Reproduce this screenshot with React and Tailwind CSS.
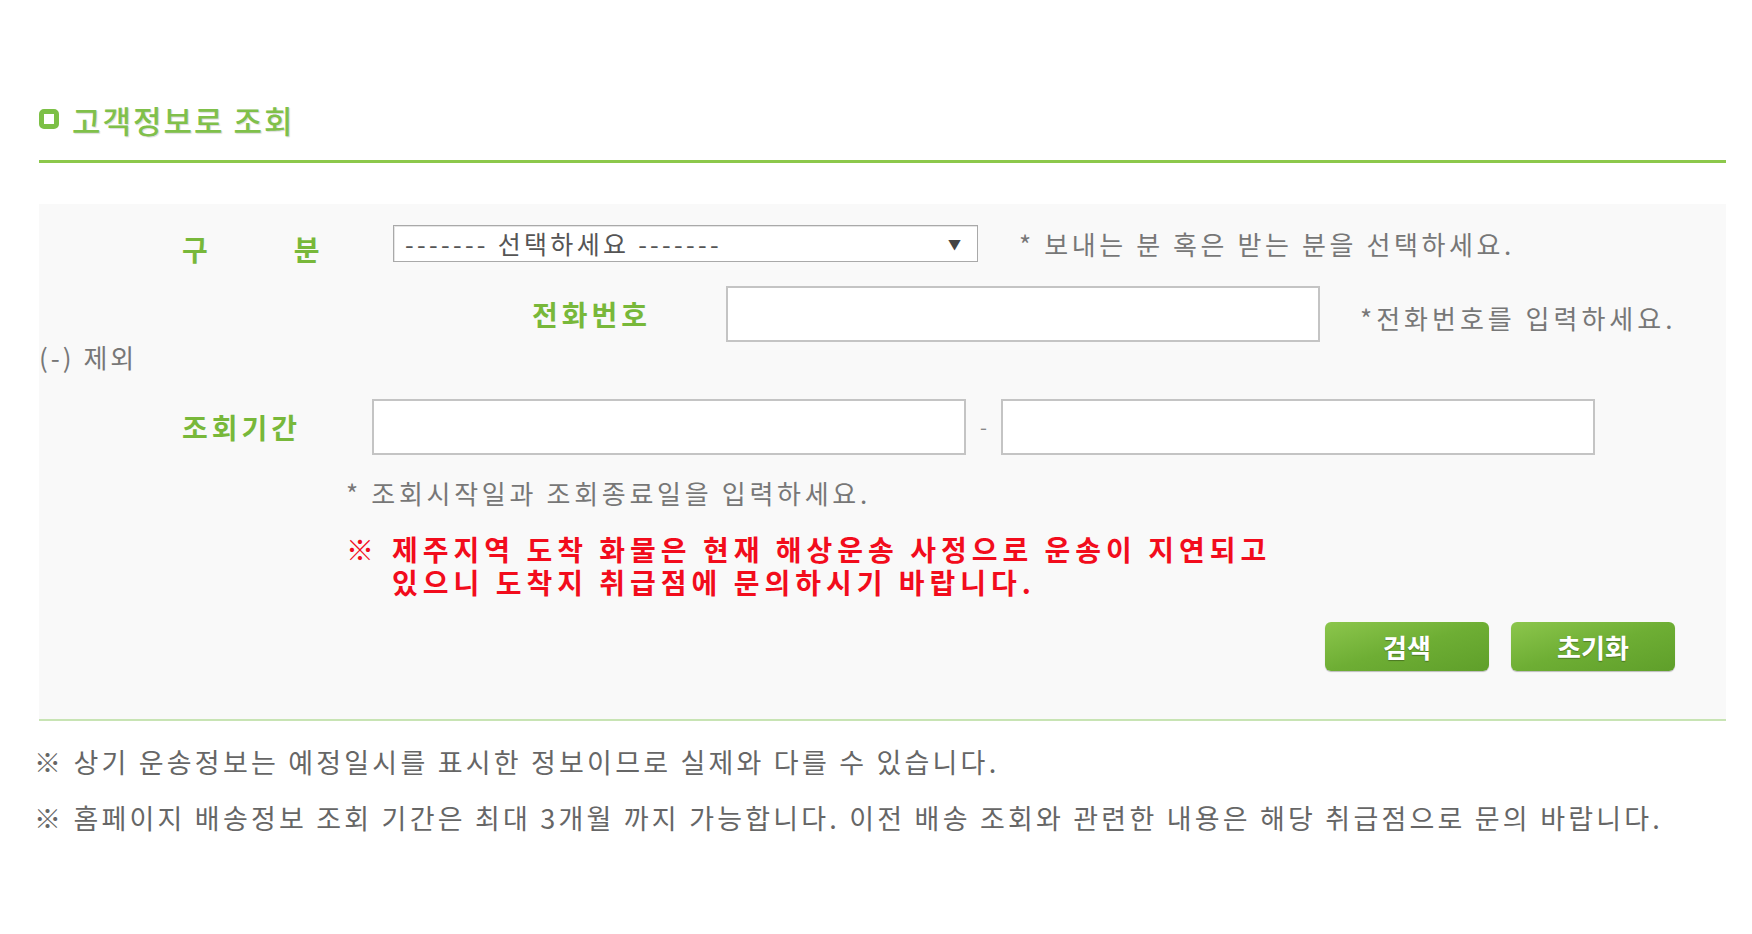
import React from 'react';

const font = { fontFamily: '"Noto Sans CJK KR", "Noto Sans", sans-serif' };

const Label = ({ children, className = '' }) => (
  <span className={`font-bold text-[28px] text-[#78b83a] leading-none tracking-[4px] ${className}`}>{children}</span>
);

const TextBox = ({ className = '' }) => (
  <input
    type="text"
    className={`h-[56px] w-[594px] bg-white border-2 border-[#c4c4c4] outline-none ${className}`}
  />
);

const GreenButton = ({ children }) => (
  <button className="relative w-[164px] h-[49px] rounded-[6px] overflow-hidden bg-gradient-to-br from-[#8cc64c] via-[#6eae34] to-[#5f9f2a] text-white font-bold text-[26px] leading-none shadow-[0_1px_1px_rgba(0,0,0,0.25)]">
    <span className="relative z-[1] [text-shadow:0_1px_1px_rgba(0,0,0,0.3)]">{children}</span>
  </button>
);

export default function App() {
  return (
    <div className="w-[1752px] min-h-[934px] bg-white text-[#666]" style={font}>
      <div className="ml-[39px] w-[1687px] pt-[99px]">
        {/* 타이틀 */}
        <div className="flex items-center h-[40px]">
          <span className="w-[20px] h-[20px] rounded-[5px] border-[5px] border-[#7cc046] bg-white"></span>
          <h2 className="ml-[13px] text-[31px] font-medium text-[#80c04a] tracking-[2px] leading-none [text-shadow:1px_1px_1px_rgba(0,0,0,0.15)]">
            고객정보로 조회
          </h2>
        </div>
        <div className="mt-[21px] h-[3px] bg-[#8cc84b]"></div>

        {/* 조회 폼 */}
        <div className="mt-[41px] bg-[#f9f9f9] border-b-2 border-[#c8e4b4] pt-[21px] pb-[48px]">
          <div className="flex items-center h-[37px]">
            <Label className="ml-[143px] w-[211px] mt-[10px] tracking-normal">
              <span>구</span>
              <span className="ml-[86px]">분</span>
            </Label>
            <div className="w-[585px] h-[37px] bg-white border border-[#a9a9a9] shadow-[inset_1px_1px_0_#e5e5e5] flex items-center justify-between pl-[11px] pr-[16px] text-[25px] text-[#555]">
              <span className="leading-none tracking-[3.3px]">------- 선택하세요 -------</span>
              <span className="text-[13px] text-[#444]">▼</span>
            </div>
            <span className="ml-[41px] text-[26px] text-[#777] leading-none tracking-[3.6px]">* 보내는 분 혹은 받는 분을 선택하세요.</span>
          </div>

          <div className="mt-[24px] flex items-center h-[56px]">
            <Label className="ml-[493px] w-[194px]">전화번호</Label>
            <TextBox />
            <span className="ml-[40px] text-[26px] text-[#777] leading-none tracking-[4px] mt-[8px]">*전화번호를 입력하세요.</span>
          </div>
          <div className="h-[30px] leading-[30px] text-[26px] text-[#777] tracking-[3px]">(-) 제외</div>

          <div className="mt-[27px] flex items-center h-[56px]">
            <Label className="ml-[143px] w-[190px]">조회기간</Label>
            <TextBox />
            <span className="w-[35px] text-center text-[20px] text-[#888]">-</span>
            <TextBox />
          </div>

          <p className="mt-[23px] ml-[307px] leading-[30px] text-[26px] text-[#777] tracking-[3.7px]">
            * 조회시작일과 조회종료일을 입력하세요.
          </p>

          <div className="mt-[25px] ml-[307px] flex text-[28px] font-bold text-[#f20c1c] tracking-[5px] leading-[33px]">
            <span className="w-[46px] shrink-0">※</span>
            <div>
              <p>제주지역 도착 화물은 현재 해상운송 사정으로 운송이 지연되고</p>
              <p>있으니 도착지 취급점에 문의하시기 바랍니다.</p>
            </div>
          </div>

          <div className="mt-[23px] flex justify-end gap-[22px] pr-[51px]">
            <GreenButton>검색</GreenButton>
            <GreenButton>초기화</GreenButton>
          </div>
        </div>
      </div>

      {/* 안내 문구 */}
      <div className="ml-[34px] text-[27px] text-[#666] leading-[56px] tracking-[3.2px] mt-[13px]">
        <p>※ 상기 운송정보는 예정일시를 표시한 정보이므로 실제와 다를 수 있습니다.</p>
        <p>※ 홈페이지 배송정보 조회 기간은 최대 3개월 까지 가능합니다. 이전 배송 조회와 관련한 내용은 해당 취급점으로 문의 바랍니다.</p>
      </div>
    </div>
  );
}
